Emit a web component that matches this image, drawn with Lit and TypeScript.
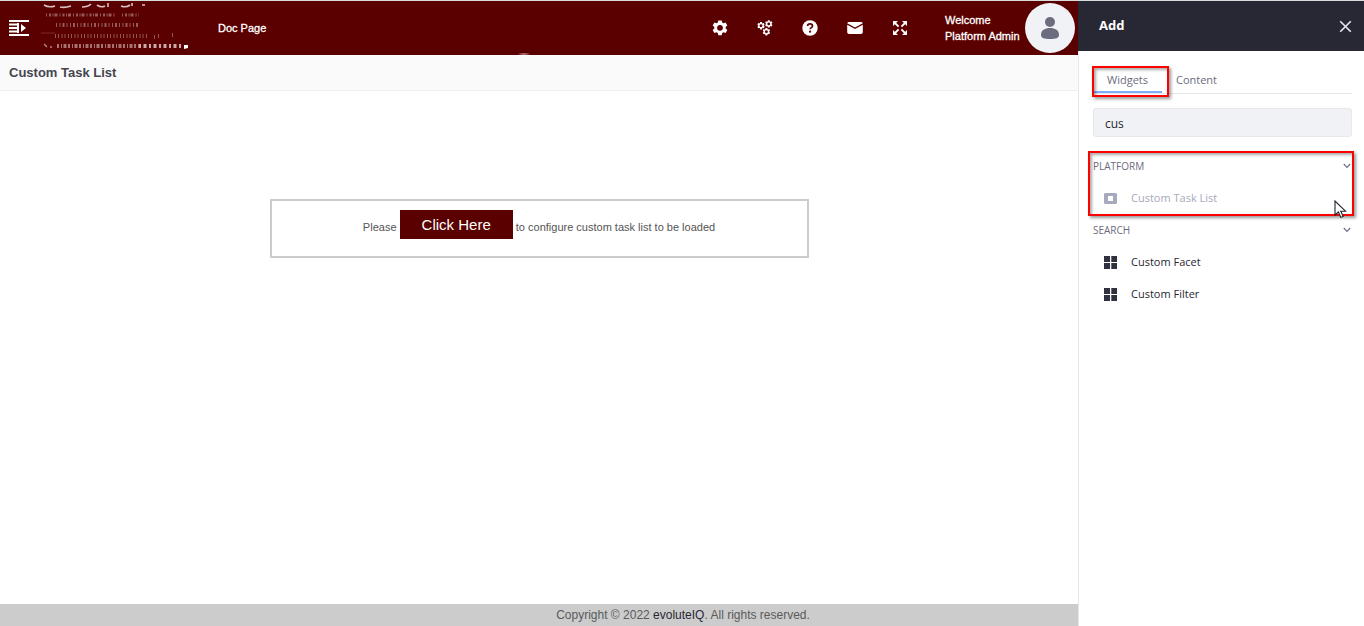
import { LitElement, html, css, svg } from "lit";
import { customElement, property, state } from "lit/decorators.js";

const chevron = html`<svg class="chev" viewBox="0 0 8 6" width="8" height="6" aria-hidden="true"><path d="M0.8 1l3.2 3.4L7.2 1" fill="none" stroke="#6b6c7e" stroke-width="1.1"/></svg>`;

const gearPath =
  "M6.3 0h3.4l.5 2.1 1.3.75 2.1-.65 1.7 2.9-1.6 1.5v1.6l1.6 1.5-1.7 2.9-2.1-.65-1.3.75-.5 2.1H6.3l-.5-2.1-1.3-.75-2.1.65-1.7-2.9 1.6-1.5V6.6L.7 5.1l1.7-2.9 2.1.65 1.3-.75zM8 4.5a2.9 2.9 0 1 0 0 5.8 2.9 2.9 0 0 0 0-5.8z";

const gear = (x: number, y: number, s: number) =>
  svg`<path transform="translate(${x} ${y}) scale(${s})" fill="#fff" fill-rule="evenodd" d=${gearPath} />`;

const actions = [
  { label: "Settings", icon: svg`${gear(0, 0.4, 1)}` },
  { label: "Services", icon: svg`${gear(0, 2, 0.5)}${gear(7.8, 0.2, 0.5)}${gear(5.4, 8, 0.5)}` },
  {
    label: "Help",
    icon: svg`<circle cx="8" cy="8" r="7.7" fill="#fff"/><path d="M5.6 6.1C5.6 4.6 6.7 3.9 8 3.9s2.5.8 2.5 2.1c0 1.6-2.4 1.7-2.4 3.3" fill="none" stroke="#5b0000" stroke-width="1.7"/><circle cx="8.1" cy="11.7" r="1.1" fill="#5b0000"/>`,
  },
  {
    label: "Messages",
    icon: svg`<path d="M2 2h12a2 2 0 0 1 1.8 1.3L8 7.6.2 3.3A2 2 0 0 1 2 2z" fill="#fff"/><path d="M.2 4.7L8 8.9l7.8-4.2v7.5A1.9 1.9 0 0 1 14 14H2a1.9 1.9 0 0 1-1.8-1.8z" fill="#fff"/>`,
  },
  {
    label: "Full screen",
    icon: svg`<g fill="#fff" stroke="#fff"><path stroke="none" d="M1 1h5L4.5 2.5 1 6zM15 1v5L10 1zM1 15v-5l5 5zM15 15h-5l5-5z"/><path stroke-width="1.8" d="M2.5 2.5L6.6 6.6M13.5 2.5L9.4 6.6M2.5 13.5l4.1-4.1M13.5 13.5L9.4 9.4"/></g>`,
  },
];

@customElement("site-header")
export class SiteHeader extends LitElement {
  static styles = css`
    :host { display: block; }
    .bar {
      display: flex; align-items: center; height: 54px; background: #5b0000; color: #fff; position: relative;
      font: 11px/16px "Liberation Sans", Arial, sans-serif; padding: 0 3px 0 9px;
    }
    .glint { position: absolute; bottom: 0; left: 48%; width: 14px; height: 2px; background: radial-gradient(closest-side, #e8c8c0, #5b0000); }
    button { border: 0; padding: 0; background: none; display: grid; cursor: pointer; }
    .logo { margin-left: 11px; width: 150px; height: 54px; }
    .doc { color: #fff; text-decoration: none; margin-left: 28px; padding-bottom: 1px; }
    .strong { -webkit-text-stroke: 0.3px #fff; }
    .actions { display: flex; gap: 29px; margin-left: auto; }
    .welcome { margin-left: 37px; width: 74px; white-space: nowrap; }
    .avatar { margin-left: 6px; width: 50px; height: 50px; flex: none; }
  `;
  render() {
    return html`<header class="bar">
      <button aria-label="Toggle menu">
        <svg width="20" height="18" viewBox="0 0 20 18"><path fill="#fff" d="M0 1h20v2H0zM0 4.6h9v2H0zM0 8h9v2H0zM0 11.5h9v2H0zM0 15h20v2H0zM8 4h2v10H8zM12 5l5 4-5 4z"/></svg>
      </button>
      <svg class="logo" viewBox="40 1 150 54" aria-label="Logo">
        <g fill="none" stroke="#efe2e2">
          <path stroke-width="1.6" opacity=".85" d="M44 5q5 3 11 1M60 7q5 1 11-1M82 7q6 0 9-3M97 5q4 3 8 1M108 3v4M121 6q5 2 9-1M132 3v3M142 5l3 0"/>
          <path stroke-width="3" opacity=".4" stroke-dasharray="1 2 2 1.5 1 1 3 2" d="M46 15H115M122 15H139"/>
          <path stroke-width="4" opacity=".4" stroke-dasharray="1 2.5 1 2 2 2" d="M56 25H138"/>
          <path stroke-width="4" opacity=".38" stroke-dasharray="1 2 1 2.5" d="M55 36H148M154 37h2M158 36h2M172 35h1"/>
          <path stroke-width="4" opacity=".5" stroke-dasharray="2 2 1 1.5 3 1.5" d="M57 46H140"/>
          <path stroke-width="4" opacity=".75" stroke-dasharray="2 2.5 3 2.5" d="M139 46H182"/>
          <path stroke-width="1.4" opacity=".6" d="M44 44l3 3M50 47h2"/>
          <path stroke-width="1" opacity=".2" d="M41 33h14"/>
        </g>
        <path d="M184 45h4v3l-4 1z" fill="#fff"/>
      </svg>
      <a class="doc strong" href="#doc">Doc Page</a>
      <div class="actions">
        ${actions.map((a) => html`<button aria-label=${a.label}><svg width="16" height="16" viewBox="0 0 16 16">${a.icon}</svg></button>`)}
      </div>
      <div class="welcome strong">Welcome<br />Platform Admin</div>
      <svg class="avatar" viewBox="0 0 50 50" role="img" aria-label="Platform Admin">
        <circle cx="25" cy="25" r="25" fill="#f1f2f5"/>
        <circle cx="25" cy="19" r="5" fill="#6b6c7e"/>
        <path d="M16 32c0-5 4-7 9-7s9 2 9 7c0 3-3 4-9 4s-9-1-9-4z" fill="#6b6c7e"/>
      </svg>
      <span class="glint"></span>
    </header>`;
  }
}

@customElement("widget-group")
export class WidgetGroup extends LitElement {
  @property() heading = "";
  @property({ attribute: false }) items: string[] = [];
  @property({ type: Boolean }) used = false;
  @state() private open = true;
  static styles = css`
    :host { display: block; }
    button { font: inherit; border: 0; background: none; padding: 0; width: 100%; display: flex; align-items: center; text-align: left; cursor: pointer; }
    .head { height: 32px; justify-content: space-between; color: #6b6c7e; font-size: 10px; padding-right: 1px; }
    .item { height: 32px; padding-left: 11px; gap: 14px; color: #272833; }
    .item:disabled { color: #a7a9bc; cursor: default; }
    ul { list-style: none; margin: 0; padding: 0; }
  `;
  render() {
    const icon = this.used
      ? html`<svg width="13" height="13" viewBox="0 0 13 13" aria-hidden="true"><path fill="#a7a9bc" fill-rule="evenodd" d="M1 1h11l1 1v9l-1 1H1l-1-1V2zM4 4v5h5V4z"/></svg>`
      : html`<svg width="13" height="13" viewBox="0 0 13 13" aria-hidden="true"><path fill="#30313f" d="M0 0h6v6H0zM7.3 0h5.7v6H7.3zM0 7h6v6H0zM7.3 7h5.7v6H7.3z"/></svg>`;
    return html`<button class="head" aria-expanded=${this.open} @click=${() => (this.open = !this.open)}>${this.heading}${chevron}</button>
      ${this.open ? html`<ul>${this.items.map((i) => html`<li><button class="item" ?disabled=${this.used}>${icon}${i}</button></li>`)}</ul>` : ""}`;
  }
}

@customElement("add-panel")
export class AddPanel extends LitElement {
  static styles = css`
    :host { display: block; background: #fff; border-left: 1px solid #e7e7ed; font: 11px/16px "Open Sans", "Noto Sans", sans-serif; }
    .title { display: flex; align-items: center; justify-content: space-between; height: 50px; padding: 0 12px 0 21px; margin-left: -1px; background: #272833; color: #fff; }
    h2 { font-size: 13px; line-height: 16px; font-weight: 700; margin: 0; padding-bottom: 2px; }
    button { font: inherit; border: 0; background: none; padding: 0; color: #6b6c7e; cursor: pointer; }
    .close { display: grid; }
    .body { padding: 17px 12px 0 14px; }
    .tabs { display: flex; border-bottom: 1px solid #e7e7ed; height: 25px; }
    .tab { padding: 0 14px 2px; height: 25px; }
    .tab.active { position: relative; padding-bottom: 0; border-bottom: 2px solid #80acff; }
    .mark { position: absolute; border: 2px solid #f00; box-shadow: 2px 2px 3px #0006, inset 2px 2px 3px #0005; pointer-events: none; }
    .mark.on-tab { inset: -2px -7px -6px -1px; }
    .mark.on-group { inset: 1px -2px -2px -5px; }
    input { box-sizing: border-box; display: block; width: 100%; height: 29px; margin-top: 14px; padding: 2px 11px 0; font: 12px/16px "Open Sans", "Noto Sans", sans-serif; color: #272833; background: #f1f2f5; border: 1px solid #e7e7ed; border-radius: 3px; outline: 0; }
    .groups { padding-top: 13px; }
    .marked { position: relative; }
    .cursor { position: absolute; right: 3px; bottom: -6px; }
  `;
  render() {
    return html`<div class="title">
        <h2>Add</h2>
        <button class="close" aria-label="Close"><svg width="13" height="13" viewBox="0 0 13 13"><path d="M1.2 1.2l10.6 10.6M11.8 1.2L1.2 11.8" stroke="#e7e7ed" stroke-width="1.6"/></svg></button>
      </div>
      <div class="body">
        <div class="tabs" role="tablist">
          <button class="tab active" role="tab" aria-selected="true">Widgets<span class="mark on-tab"></span></button>
          <button class="tab" role="tab" aria-selected="false">Content</button>
        </div>
        <input type="text" aria-label="Search widgets" .value=${"cus"} />
        <div class="groups">
          <div class="marked">
            <widget-group heading="PLATFORM" used .items=${["Custom Task List"]}></widget-group>
            <span class="mark on-group"></span>
            <svg class="cursor" width="16" height="20" viewBox="0 0 16 20" aria-hidden="true"><path d="M2 1v14l3.4-3 2.4 5.4 2.4-1-2.4-5.2h4.7z" fill="#fff" stroke="#20202c" stroke-width="1.1"/></svg>
          </div>
          <widget-group heading="SEARCH" .items=${["Custom Facet", "Custom Filter"]}></widget-group>
        </div>
      </div>`;
  }
}

@customElement("app-root")
export class AppRoot extends LitElement {
  static styles = css`
    :host { display: grid; grid-template-columns: minmax(0, 1fr) 286px; min-height: 100vh; box-sizing: border-box; border-top: 1px solid #d9dcdc; background: #fff; font-family: "Liberation Sans", Arial, sans-serif; }
    .page { display: flex; flex-direction: column; }
    h1 { margin: 0; padding: 9px; font-size: 13px; line-height: 17px; font-weight: 700; color: #44454f; background: #fafafa; border-bottom: 1px solid #eeeeee; }
    main { flex: 1; }
    .notice { box-sizing: border-box; width: 50%; height: 59px; margin: 108px auto 0; padding-top: 9px; border: 2px solid #ccc; text-align: center; font-size: 11px; line-height: 29px; color: #555; }
    .notice button { font: 15px/29px "Liberation Sans", Arial, sans-serif; height: 29px; padding: 0 22px; border: 0; background: #5b0000; color: #fff; vertical-align: 1px; cursor: pointer; }
    footer { background: #ccc; color: #5a5a5a; height: 22px; line-height: 22px; font-size: 12px; padding-left: 288px; text-align: center; }
    footer a { color: #272833; text-decoration: none; }
  `;
  render() {
    return html`<div class="page">
        <site-header></site-header>
        <h1>Custom Task List</h1>
        <main><div class="notice">Please <button>Click Here</button> to configure custom task list to be loaded</div></main>
        <footer>Copyright © 2022 <a href="#evolute">evoluteIQ</a>. All rights reserved.</footer>
      </div>
      <add-panel></add-panel>`;
  }
}
